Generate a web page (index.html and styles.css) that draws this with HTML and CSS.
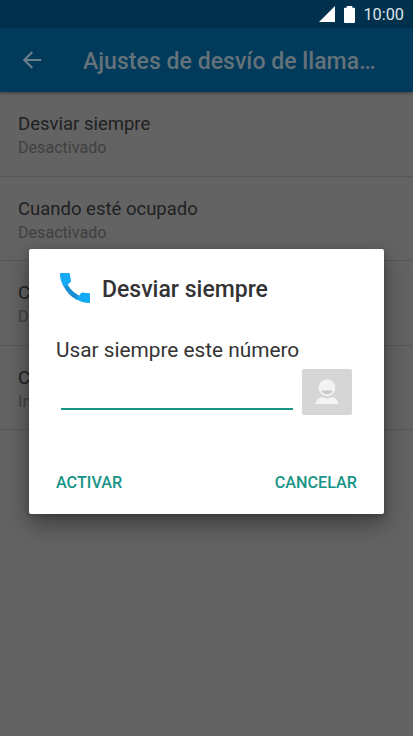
FILE: index.html
```html
<!DOCTYPE html>
<html lang="es">
<head>
<meta charset="utf-8">
<title>Ajustes de desvío de llamadas</title>
<link rel="stylesheet" href="styles.css">
</head>
<body>
<div class="screen">
  <div class="status-bar">
    <svg class="signal" width="16" height="16" viewBox="0 0 16 16"><path d="M0 16 16 0V16Z"/></svg>
    <svg class="battery" width="11" height="17" viewBox="0 0 11 17"><path d="M2.7 0h5.6v1.8H10q1 0 1 1V16q0 1-1 1H1q-1 0-1-1V2.8q0-1 1-1h1.7Z"/></svg>
    <span class="clock">10:00</span>
  </div>
  <header class="app-bar">
    <svg class="back" width="20" height="18" viewBox="0 0 20 18"><path d="M10.3 1 2.3 9l8 8M2.3 9H19.3"/></svg>
    <h1 class="app-title">Ajustes de desvío de llama…</h1>
  </header>
  <main class="settings">
    <div class="row"><div class="name">Desviar siempre</div><div class="state">Desactivado</div></div>
    <div class="row"><div class="name">Cuando esté ocupado</div><div class="state">Desactivado</div></div>
    <div class="row"><div class="name">C</div><div class="state">D</div></div>
    <div class="row"><div class="name">C</div><div class="state">In</div></div>
  </main>
  <section class="dialog">
    <div class="dialog-head">
      <svg class="phone" width="30" height="30" viewBox="0 0 30 30"><path fill="#188fd2" d="M3.5 13 7.5 11.5Q11.5 18.5 19 22.5L17 27Q8 22.5 3.5 13Z"/><path fill="#14a9f4" d="M1 0H8.7Q9.8 0 9.9 1.2Q10 4 11 7.4Q11.2 8.2 10.6 9L6.6 12.8 3.8 13.8Q0 7.5 0 1Q0 0 1 0Z"/><path fill="#14a9f4" d="M16.2 26.3 21 20.3Q21.7 19.3 22.7 19.4Q25.5 20.1 28.7 20.1Q30 20.1 30 21.3V28.7Q30 30 28.7 30Q22 30 16.2 26.3Z"/></svg>
      <h2 class="dialog-title">Desviar siempre</h2>
    </div>
    <div class="message">Usar siempre este número</div>
    <div class="entry">
      <div class="field"></div>
      <div class="contact">
        <svg width="24" height="26" viewBox="0 0 24 26"><circle cx="12" cy="8.8" r="8.4" fill="#f3f3f3"/><path fill="#c9c9c9" d="M6.3 11.4H17.7Q16 15.2 12 15.2T6.3 11.4Z"/><path fill="#f3f3f3" d="M.5 25Q1.5 19.5 6.5 18Q12 20.8 17.5 18Q22.5 19.5 23.5 25Z"/></svg>
      </div>
    </div>
    <div class="actions"><span>ACTIVAR</span><span>CANCELAR</span></div>
  </section>
</div>
</body>
</html>
```
FILE: styles.css
```css
* { box-sizing: border-box; }
body { margin: 0; font-family: Roboto, sans-serif; }
.screen { position: relative; width: 413px; height: 736px; overflow: hidden; background: #636363; }
.status-bar { height: 28px; padding: 1px 9px 0 0; display: flex; justify-content: flex-end; align-items: center; background: #01314d; }
.signal, .battery { fill: #fff; margin-top: -1px; }
.battery { margin-left: 9px; }
.clock { margin-left: 8px; font-size: 16.3px; line-height: 20px; color: #dce4e9; }
.app-bar { height: 64px; display: flex; align-items: center; padding-left: 22px; background: #013a5b; box-shadow: 0 1px 3px rgba(0,0,0,.4); }
.back { fill: none; stroke: #6c7f89; stroke-width: 2.2; }
.app-title { margin: 3px 0 0 41px; font-size: 23.1px; line-height: 28px; font-weight: 500; color: #64727a; white-space: nowrap; }
.row { height: 84.5px; padding: 20px 18px 0; border-bottom: 1px solid #575757; }
.name { font-size: 18.5px; line-height: 24px; color: #212121; }
.state { font-size: 16.1px; line-height: 23px; color: #404040; }
.dialog { position: absolute; left: 29px; top: 249px; width: 355px; height: 265px; padding: 24px 27px 0; border-radius: 2px; background: #fff; box-shadow: 0 10px 24px rgba(0,0,0,.38), 0 2px 6px rgba(0,0,0,.2); }
.dialog-head { display: flex; height: 32px; padding-left: 4px; }
.dialog-title { margin: 3px 0 0 12px; font-size: 23px; line-height: 28px; font-weight: 500; color: #333; }
.message { margin-top: 32px; font-size: 20.8px; line-height: 26px; color: #333; }
.entry { display: flex; align-items: flex-start; margin-top: 6px; padding-left: 5px; }
.field { width: 232px; height: 41px; border-bottom: 2px solid #169486; }
.contact { width: 50px; height: 46px; margin-left: 9px; border-radius: 2px; background: #d6d6d6; display: flex; justify-content: center; align-items: center; }
.actions { display: flex; justify-content: space-between; margin-top: 57px; font-size: 16.2px; line-height: 22px; font-weight: 500; color: #169486; }
```
